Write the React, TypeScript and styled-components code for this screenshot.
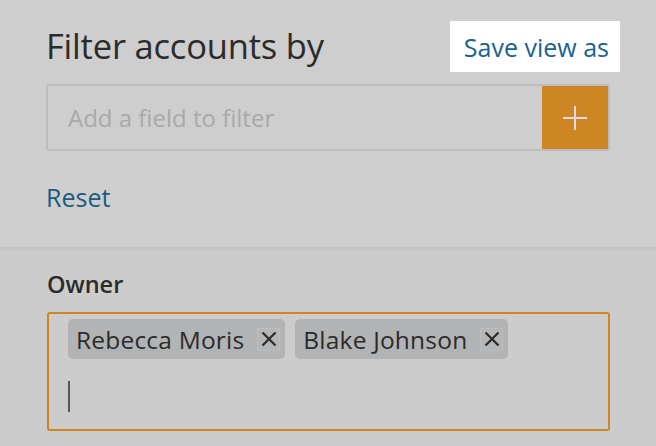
import React from "react";
import styled, { createGlobalStyle } from "styled-components";

const GlobalStyle = createGlobalStyle`
  html, body {
    margin: 0;
    padding: 0;
    background: #cccccc;
  }
  body {
    font-family: "Open Sans", "Noto Sans", sans-serif;
    color: #2b2b2b;
  }
`;

const owners = ["Rebecca Moris", "Blake Johnson"];

const App = () => {
  return (
    <Page>
      <GlobalStyle />
      <FilterPanel>
        <Header>
          <Title>Filter accounts by</Title>
          <SaveButton>Save view as</SaveButton>
        </Header>
        <FieldInput>
          <Placeholder>Add a field to filter</Placeholder>
          <AddButton aria-label="Add field">
            <svg width="26" height="26" viewBox="0 0 26 26">
              <path d="M13 1v24M1 13h24" stroke="#dcdcdc" strokeWidth="2" />
            </svg>
          </AddButton>
        </FieldInput>
        <ResetLink>Reset</ResetLink>
      </FilterPanel>
      <Section>
        <Label>Owner</Label>
        <TagBox>
          {owners.map((name) => (
            <Tag key={name}>
              <TagName>{name}</TagName>
              <TagClose>
                <svg width="16" height="16" viewBox="0 0 16 16">
                  <path d="M1.5 1.5l13 13M14.5 1.5l-13 13" stroke="#2b2b2b" strokeWidth="2.2" />
                </svg>
              </TagClose>
            </Tag>
          ))}
          <CaretLine>
            <Caret />
          </CaretLine>
        </TagBox>
      </Section>
    </Page>
  );
};

export default App;

const Page = styled.div`
  width: 656px;
  height: 446px;
  overflow: hidden;
`;

const FilterPanel = styled.div`
  box-sizing: border-box;
  height: 247px;
  padding: 21px 46px 0 46px;
  background: #cecece;
  box-shadow: 0 2px 5px rgba(0, 0, 0, 0.07);
  position: relative;
`;

const Header = styled.div`
  display: flex;
  align-items: center;
  justify-content: space-between;
  height: 51px;
`;

const Title = styled.h1`
  margin: -3px 0 0 0;
  font-size: 34.5px;
  font-weight: 400;
  letter-spacing: -0.2px;
  color: #2b2b2b;
`;

const SaveButton = styled.button`
  height: 51px;
  margin-right: -10px;
  padding: 0 11px 0 14px;
  border: none;
  background: #ffffff;
  font-family: inherit;
  font-size: 25px;
  color: #1a628f;
  cursor: pointer;
`;

const FieldInput = styled.div`
  box-sizing: border-box;
  display: flex;
  align-items: stretch;
  height: 67px;
  margin-top: 12px;
  border: 2px solid #bdbdbd;
  border-radius: 3px;
`;

const Placeholder = styled.div`
  flex: 1;
  display: flex;
  align-items: center;
  padding-left: 20px;
  font-size: 24px;
  color: #a9a9a9;
`;

const AddButton = styled.button`
  width: 66px;
  padding: 0;
  border: none;
  background: #cd8623;
  display: flex;
  align-items: center;
  justify-content: center;
`;

const ResetLink = styled.a`
  display: inline-block;
  margin: 29px 0 0 0;
  font-size: 25px;
  color: #1a5c80;
  cursor: pointer;
`;

const Section = styled.div`
  padding: 21px 46px 0 47px;
`;

const Label = styled.div`
  font-size: 23.5px;
  font-weight: 600;
  color: #2b2b2b;
`;

const TagBox = styled.div`
  box-sizing: border-box;
  display: flex;
  flex-wrap: wrap;
  align-content: flex-start;
  gap: 0 10px;
  height: 119px;
  margin-top: 12px;
  padding: 5px 19px 0 19px;
  border: 2px solid #cd8623;
  border-radius: 3px;
`;

const Tag = styled.div`
  display: flex;
  align-items: center;
  height: 40px;
  padding: 0 5px 0 8px;
  border-radius: 5px;
  background: #b1b3b5;
`;

const TagName = styled.span`
  font-size: 24.5px;
  letter-spacing: 0.2px;
  color: #2b2b2b;
`;

const TagClose = styled.span`
  box-sizing: border-box;
  display: flex;
  align-items: center;
  justify-content: center;
  width: 23px;
  height: 23px;
  margin-left: 13px;
  border: 1px solid #bdbebf;
  background: #b5b6b7;
`;

const CaretLine = styled.div`
  flex-basis: 100%;
  padding-top: 22px;
`;

const Caret = styled.span`
  display: block;
  width: 2px;
  height: 31px;
  background: #555555;
`;
